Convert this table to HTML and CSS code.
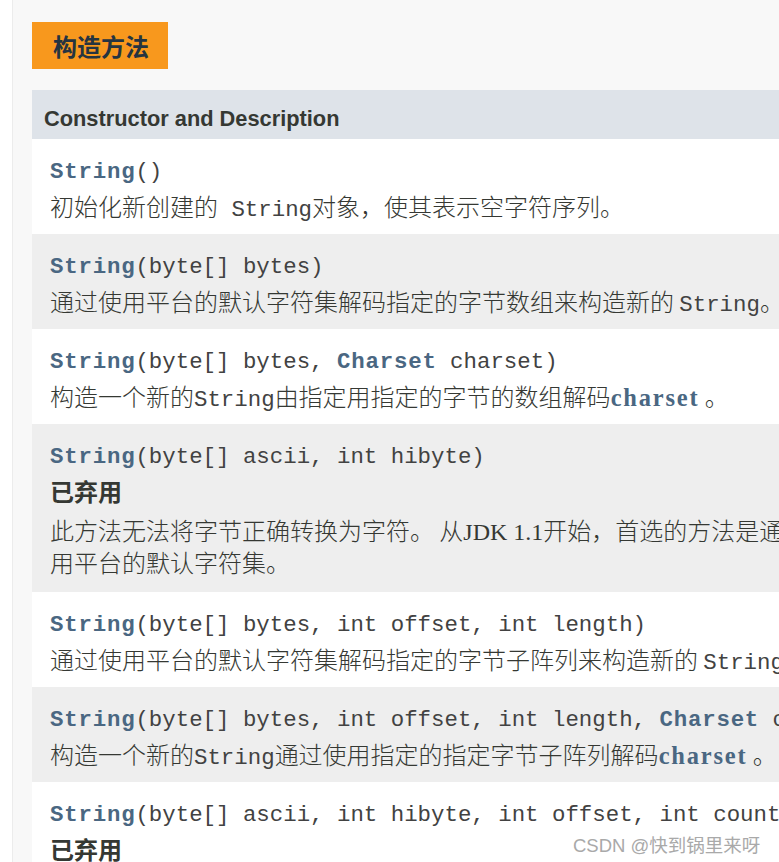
FILE: index.html
```html
<!DOCTYPE html>
<html lang="zh-CN">
<head>
<meta charset="utf-8">
<title>String 构造方法</title>
<link rel="stylesheet" href="styles.css">
</head>
<body>
<div class="page">
  <div class="caption">构造方法</div>
  <div class="summary">
    <div class="thead">Constructor and Description</div>

    <div class="row">
      <div class="sig"><b class="name">String</b>()</div>
      <div class="block">初始化新创建的<code> String</code>对象，使其表示空字符序列。</div>
    </div>

    <div class="row alt">
      <div class="sig"><b class="name">String</b>(byte[] bytes)</div>
      <div class="block">通过使用平台的默认字符集解码指定的字节数组来构造新的 <code>String</code>。</div>
    </div>

    <div class="row">
      <div class="sig"><b class="name">String</b>(byte[] bytes, <b class="name">Charset</b> charset)</div>
      <div class="block">构造一个新的<code>String</code>由指定用指定的字节的数组解码<b class="link">charset</b> 。</div>
    </div>

    <div class="row alt tall">
      <div class="sig"><b class="name">String</b>(byte[] ascii, int hibyte)</div>
      <div class="block deprecated">已弃用</div>
      <div class="block">此方法无法将字节正确转换为字符。 从<span class="serif">JDK 1.1</span>开始，首选的方法是通过<code>String</code>构造函数获取一个<code>Charset</code>，字符集名称，或者使<br>用平台的默认字符集。</div>
    </div>

    <div class="row">
      <div class="sig"><b class="name">String</b>(byte[] bytes, int offset, int length)</div>
      <div class="block">通过使用平台的默认字符集解码指定的字节子阵列来构造新的 <code>String</code>。</div>
    </div>

    <div class="row alt">
      <div class="sig"><b class="name">String</b>(byte[] bytes, int offset, int length, <b class="name">Charset</b> charset)</div>
      <div class="block">构造一个新的<code>String</code>通过使用指定的指定字节子阵列解码<b class="link">charset</b> 。</div>
    </div>

    <div class="row">
      <div class="sig"><b class="name">String</b>(byte[] ascii, int hibyte, int offset, int count)</div>
      <div class="block deprecated">已弃用</div>
    </div>
  </div>
</div>
<div class="watermark">CSDN @快到锅里来呀</div>
</body>
</html>
```
FILE: styles.css
```css
html, body {
  margin: 0;
  height: 100%;
  overflow: hidden;
  background: #ffffff;
}

.page {
  margin-left: 12px;
  border-left: 1px solid #ececec;
  background: #f8f8f8;
  min-height: 100%;
  box-sizing: border-box;
  padding: 22px 0 0 19px;
  overflow: hidden;
}

.caption {
  width: fit-content;
  height: 47px;
  padding: 0 19px 0 21px;
  background: #f8981d;
  color: #253441;
  font: bold 24px/47px "Noto Sans CJK SC", sans-serif;
}

.summary {
  margin-top: 21px;
  width: 1400px;
}

.thead {
  height: 49px;
  box-sizing: border-box;
  padding: 9px 0 0 12px;
  background: #dee3e9;
  color: #353833;
  font: bold 21.8px/40px "Liberation Sans", Arial, sans-serif;
}

.row {
  background: #ffffff;
  padding: 15px 0 12px 18px;
  white-space: nowrap;
}

.row.alt {
  background: #eeeeee;
}

.row.tall {
  padding-bottom: 14px;
}

.sig {
  font: 22.4px/36px "Liberation Mono", "Courier New", monospace;
  color: #424242;
}

.name {
  font-weight: bold;
  color: #4a6782;
  letter-spacing: 0.8px;
}

.block {
  font: 300 24px/32px "Noto Sans CJK SC", sans-serif;
  color: #353833;
}

.block code {
  font: 400 22.4px "Liberation Mono", "Courier New", monospace;
  color: #424242;
  line-height: 0;
}

.block .link {
  font: bold 24.5px "Liberation Serif", serif;
  color: #4a6782;
  letter-spacing: 1.8px;
  line-height: 0;
}

.block .serif {
  font: 400 24px "Liberation Serif", serif;
  line-height: 0;
}

.block.deprecated {
  font-weight: bold;
}

.deprecated + .block {
  margin-top: 7px;
}

.watermark {
  position: absolute;
  left: 573px;
  top: 836px;
  font: 18.5px/20px "Liberation Sans", "Noto Sans CJK SC", sans-serif;
  color: #a9a9a9;
  white-space: nowrap;
}
```
